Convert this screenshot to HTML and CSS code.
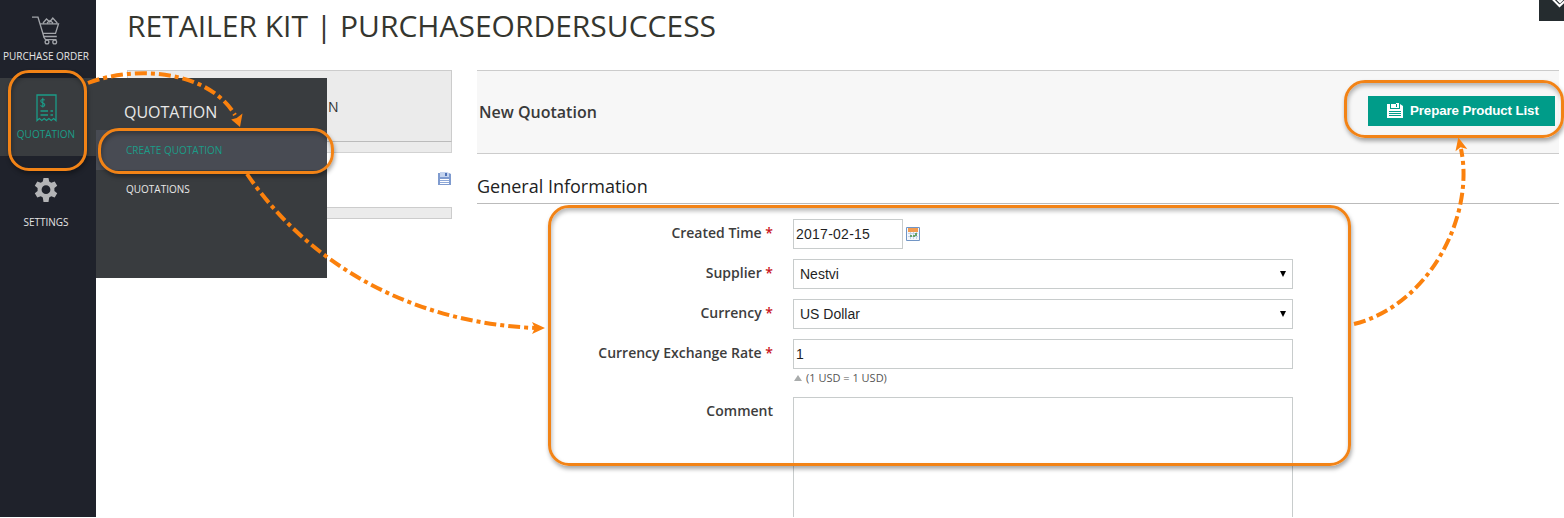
FILE: index.html
```
<!DOCTYPE html>
<html lang="en">
<head>
<meta charset="utf-8">
<title>Retailer Kit | PurchaseOrderSuccess</title>
<link rel="stylesheet" href="styles.css">
</head>
<body>
<div class="page">
  <nav class="sidebar">
    <a class="nav-item nav-order">
      <svg width="28" height="29" viewBox="0 0 28 29" fill="none" stroke="#a2a5aa" stroke-width="1.300"><path d="M0 1.200h6l2.800 9.300 3 10h13M8 7.800h18.500l-3 9.600H11M11.300 20.500l2.200 3.200h11M11 7l3.500-4 3.300 3 3-4 4.500 5M15 7l3-2.500L21 7"/><circle cx="15" cy="26" r="1.900"/><circle cx="22.700" cy="26" r="1.900"/></svg>
      <span>PURCHASE ORDER</span>
    </a>
    <a class="nav-item nav-quotation">
      <svg width="21" height="28" viewBox="0 0 21 28" fill="none" stroke="#1b9c88" stroke-width="1.300"><path d="M1 26.500V1h19v25.500l-2.400-2-2.400 2-2.300-2-2.400 2-2.300-2-2.400 2-2.400-2z"/><path stroke-width="1.100" d="M8.700 6.200C7.500 5 4.800 5.300 4.800 7.100c0 2.100 4 1.500 4 3.700 0 2-2.800 2-4.300.5M6.800 3.700v9.800"/><path d="M4.500 17h7.500M14.500 17h2.500M4.500 21h7.500M14.500 21h2.500"/></svg>
      <span>QUOTATION</span>
    </a>
    <a class="nav-item nav-settings">
      <svg width="24" height="24" viewBox="0 0 24 24"><path fill="#b3b4b6" fill-rule="evenodd" d="M9.500 0h5l.7 3.600 2 1.100 3.500-1.300 2.500 4.300-2.800 2.400v2.800l2.800 2.400-2.500 4.300-3.500-1.300-2 1.200-.7 4.500h-5l-.7-4.500-2-1.200-3.500 1.300-2.500-4.300 2.800-2.400v-2.800L.8 7.700l2.500-4.300 3.500 1.300 2-1.100zM12 7.300a4.400 4.400 0 1 0 0 8.800 4.400 4.400 0 0 0 0-8.800z"/></svg>
      <span>SETTINGS</span>
    </a>
  </nav>

  <main class="main">
    <h1 class="title">RETAILER KIT | PURCHASEORDERSUCCESS</h1>
    <div class="columns">
      <aside class="side">
        <div class="tab">N</div>
        <div class="tab-foot"></div>
        <div class="side-row">
          <svg width="13" height="13" viewBox="0 0 13 13"><path fill="#7f9bcf" d="M0 1h2v4h9V1l2 1v11H0z"/><path fill="#c3d3ee" d="M2 0h7l2 1v4H2z"/><path fill="#4f72b5" d="M7 1h2v3H7z"/><path fill="#fff" d="M2 7h9v5H2z"/><path stroke="#8ea8d8" d="M2 8.500h9M2 10.500h9"/></svg>
        </div>
        <div class="side-bar"></div>
      </aside>

      <section class="content">
        <header class="actions">
          <h2>New Quotation</h2>
          <button class="primary">
            <svg width="16" height="15" viewBox="0 0 16 15"><path fill="#fff" d="M0 1h3v5h10V1l3 2v12H0zM4 1h5v4H4zM9 0h3v5H9z"/><path fill="#009c89" d="M9 1h1v3H9z"/><path stroke="#009c89" d="M2 8.500h12M2 10.500h12M2 12.500h12"/></svg>
            <span>Prepare Product List</span>
          </button>
        </header>
        <h3 class="legend">General Information</h3>
        <form class="form">
          <label>Created Time <b>*</b></label>
          <div class="date-row">
            <div class="field date">2017-02-15</div>
            <svg width="14" height="14" viewBox="0 0 14 14"><path fill="#f4f7fb" stroke="#7195c5" d="M.5.500h13v13H.5z"/><path fill="#f29b50" d="M2 1h10v4H2z"/><path stroke="#c3d3e8" d="M2 6.500h10M2 9.500h10M4.500 5v7M7.500 5v7M10.500 5v7"/><path fill="#66a36b" d="M9 6h2v3H9zM4 8h2v2H4zM7 8h2v2H7z"/></svg>
          </div>
          <label>Supplier <b>*</b></label>
          <div class="field select"><span>Nestvi</span><i></i></div>
          <label>Currency <b>*</b></label>
          <div class="field select"><span>US Dollar</span><i></i></div>
          <label>Currency Exchange Rate <b>*</b></label>
          <div>
            <div class="field">1</div>
            <div class="note"><i></i><span>(1 USD = 1 USD)</span></div>
          </div>
          <label>Comment</label>
          <div class="field comment"></div>
        </form>
      </section>
    </div>
  </main>

  <div class="flyout">
    <div class="flyout-title">QUOTATION</div>
    <a class="flyout-link active">CREATE QUOTATION</a>
    <a class="flyout-link">QUOTATIONS</a>
  </div>

  <div class="corner">
    <svg width="25" height="21" viewBox="0 0 25 21" fill="none" stroke="#fff" stroke-width="2"><path d="M13.500-1l7 7 7-6.500M17-2l4 4 4-4"/></svg>
  </div>

  <div class="mark mark-nav"></div>
  <div class="mark mark-create"></div>
  <div class="mark mark-form"></div>
  <div class="mark mark-button"></div>
  <svg class="arrows" width="1564" height="518" viewBox="0 0 1564 518">
    <g class="dashes">
      <path d="M88 83C135 65 208 70 235 115"/>
      <path d="M247 174C302 255 400 322 535 328"/>
      <path d="M1354 324C1430 305 1475 215 1461 149"/>
    </g>
    <g class="heads">
      <path d="M240 127l-8.800-7.500 5.500-1.500 5.800-4.500z"/>
      <path d="M545 328l-13 6 3-6-3-6z"/>
      <path d="M1458.300 137.500l9 11.500-6.800-1.800-5 4z"/>
    </g>
  </svg>
</div>
</body>
</html>
```
FILE: styles.css
```
* { box-sizing: border-box; }
body { margin: 0; background: #fff; color: #303030; font-family: "Open Sans", sans-serif; }
h1, h2, h3 { margin: 0; font-weight: 400; }
svg { display: block; flex: none; }
.page { position: relative; display: flex; width: 1564px; height: 518px; overflow: hidden; }

.sidebar { width: 96px; height: 517px; flex: none; background: #1f222b; }
.nav-item { display: flex; flex-direction: column; align-items: center; height: 78px; color: #e4e4e4; font-size: 10px; line-height: 14px; white-space: nowrap; }
.nav-order { padding: 16px 4px 0 0; }
.nav-order span { margin-top: 4px; }
.nav-quotation { padding: 16px 4px 0 0; background: #393c3f; color: #1b9c88; }
.nav-quotation span { margin-top: 5px; }
.nav-settings { padding: 22px 4px 0 0; }
.nav-settings span { margin-top: 13px; }

.main { flex: none; width: 1463px; height: 517px; padding-left: 31px; overflow: hidden; }
.title { height: 70px; padding-top: 6px; font-size: 30px; line-height: 40px; color: #35362f; white-space: nowrap; }
.columns { display: flex; gap: 25px; }

.side { width: 325px; flex: none; }
.tab { height: 72px; padding: 26px 0 0 200px; border: 1px solid #ccc; border-bottom-color: #bbb; background: #ebebeb; font-size: 14px; line-height: 19px; }
.tab-foot { height: 11px; border: 1px solid #d2d2d2; border-top: 0; background: #ebebeb; }
.side-row { display: flex; justify-content: flex-end; height: 54px; padding: 19px 1px 0 0; }
.side-bar { height: 12px; border: 1px solid #ccc; background: #ebebeb; }

.content { width: 1082px; flex: none; }
.actions { display: flex; align-items: center; justify-content: space-between; height: 84px; padding: 0 4px 0 2px; border: solid #ccc; border-width: 1px 0; background: #f7f7f7; }
.actions h2 { font-size: 16px; line-height: 22px; font-weight: 600; color: #3a3a3a; }
.primary { display: flex; align-items: center; gap: 7px; width: 187px; height: 30px; margin-top: -3px; padding: 0 0 0 19px; border: 0; background: #009c89; color: #fff; font: bold 13.330px/18px "Liberation Sans", Arial, sans-serif; letter-spacing: -.12px; white-space: nowrap; }
.legend { height: 50px; padding-top: 20px; border-bottom: 1px solid #bbb; font-size: 18px; line-height: 25px; color: #222; }

.form { display: grid; grid-template-columns: 296px 500px; column-gap: 20px; row-gap: 10px; padding-top: 15px; }
.form label { padding-top: 4px; font-size: 14px; line-height: 19px; font-weight: 600; color: #3d3d3d; text-align: right; white-space: nowrap; }
.form b { color: #c9131c; font-weight: 600; }
.field { display: flex; align-items: center; height: 30px; padding: 0 2px; border: 1px solid #c8cccc; background: #fff; color: #1f1f1f; font: 14px/18px "Liberation Sans", Arial, sans-serif; }
.date-row { display: flex; align-items: center; gap: 3px; }
.date { width: 110px; letter-spacing: .25px; }
.select { justify-content: space-between; padding: 0 6px; }
.select i { border: solid transparent; border-width: 6px 3px 0; border-top-color: #000; }
.note { display: flex; align-items: center; gap: 4px; height: 18px; padding: 0 0 1px 1px; color: #555; font-size: 11px; line-height: 15px; }
.note i { border: solid transparent; border-width: 0 4px 6px; border-bottom-color: #a9acac; }
.comment { height: 150px; }

.flyout { position: absolute; left: 96px; top: 78px; width: 231px; height: 200px; padding-top: 21px; background: #393c3f; color: #e8e8e8; }
.flyout-title { height: 31px; padding-left: 28px; font-size: 16px; line-height: 26px; }
.flyout-link { display: flex; align-items: center; height: 40px; padding-left: 30px; font-size: 10px; line-height: 14px; }
.flyout-link.active { background: #484b53; color: #1b9c88; }
.flyout-link:last-child { height: 38px; }
.corner { position: absolute; left: 1539px; top: 0; width: 25px; height: 21px; background: #252c2f; }

.mark { position: absolute; border: 3px solid #f28316; border-radius: 21px; box-shadow: 1px 3px 4px rgba(0,0,0,.34), inset 1px 3px 4px rgba(0,0,0,.28); }
.mark-nav { left: 8px; top: 70px; width: 79px; height: 101px; }
.mark-create { left: 98px; top: 128px; width: 236px; height: 46px; }
.mark-form { left: 548px; top: 205px; width: 803px; height: 261px; }
.mark-button { left: 1344px; top: 80px; width: 220px; height: 58px; }
.arrows { position: absolute; left: 0; top: 0; pointer-events: none; }
.dashes { fill: none; stroke: #fb810d; stroke-width: 4; stroke-dasharray: 12 4 4 4; }
.heads { fill: #fb810d; }
```
